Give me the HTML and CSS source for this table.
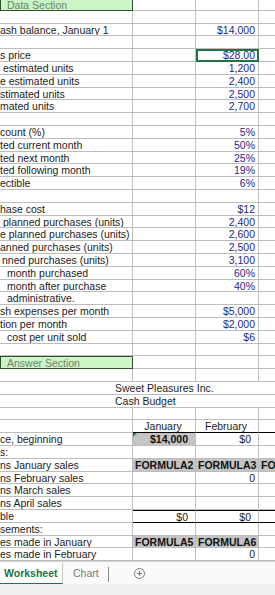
FILE: index.html
```html
<!DOCTYPE html>
<html>
<head>
<meta charset="utf-8">
<link rel="stylesheet" href="styles.css">
</head>
<body>
<div class="app">
  <div class="sheet">
    <div class="c sec">Data Section</div><div class="c"></div><div class="c"></div><div class="c"></div>
    <div class="c"></div><div class="c"></div><div class="c"></div><div class="c"></div>
    <div class="c">ash balance, January 1</div><div class="c"></div><div class="c v">$14,000</div><div class="c"></div>
    <div class="c"></div><div class="c"></div><div class="c"></div><div class="c"></div>
    <div class="c">s price</div><div class="c"></div><div class="c v sel">$28.00</div><div class="c"></div>
    <div class="c i3">estimated units</div><div class="c"></div><div class="c v">1,200</div><div class="c"></div>
    <div class="c">e estimated units</div><div class="c"></div><div class="c v">2,400</div><div class="c"></div>
    <div class="c">stimated units</div><div class="c"></div><div class="c v">2,500</div><div class="c"></div>
    <div class="c">mated units</div><div class="c"></div><div class="c v">2,700</div><div class="c"></div>
    <div class="c"></div><div class="c"></div><div class="c"></div><div class="c"></div>
    <div class="c">count (%)</div><div class="c"></div><div class="c v">5%</div><div class="c"></div>
    <div class="c">ted current month</div><div class="c"></div><div class="c v">50%</div><div class="c"></div>
    <div class="c">ted next month</div><div class="c"></div><div class="c v">25%</div><div class="c"></div>
    <div class="c">ted following month</div><div class="c"></div><div class="c v">19%</div><div class="c"></div>
    <div class="c">ectible</div><div class="c"></div><div class="c v">6%</div><div class="c"></div>
    <div class="c"></div><div class="c"></div><div class="c"></div><div class="c"></div>
    <div class="c">hase cost</div><div class="c"></div><div class="c v">$12</div><div class="c"></div>
    <div class="c i3">planned purchases (units)</div><div class="c"></div><div class="c v">2,400</div><div class="c"></div>
    <div class="c">e planned purchases (units)</div><div class="c"></div><div class="c v">2,600</div><div class="c"></div>
    <div class="c">anned purchases (units)</div><div class="c"></div><div class="c v">2,500</div><div class="c"></div>
    <div class="c i2">nned purchases (units)</div><div class="c"></div><div class="c v">3,100</div><div class="c"></div>
    <div class="c i7">month purchased</div><div class="c"></div><div class="c v">60%</div><div class="c"></div>
    <div class="c i7">month after purchase</div><div class="c"></div><div class="c v">40%</div><div class="c"></div>
    <div class="c i7">administrative.</div><div class="c"></div><div class="c"></div><div class="c"></div>
    <div class="c">sh expenses per month</div><div class="c"></div><div class="c v">$5,000</div><div class="c"></div>
    <div class="c">tion per month</div><div class="c"></div><div class="c v">$2,000</div><div class="c"></div>
    <div class="c i7">cost per unit sold</div><div class="c"></div><div class="c v">$6</div><div class="c"></div>
    <div class="c"></div><div class="c"></div><div class="c"></div><div class="c"></div>
    <div class="c sec">Answer Section</div><div class="c"></div><div class="c"></div><div class="c"></div>
    <div class="c"></div><div class="c"></div><div class="c"></div><div class="c"></div>
    <div class="c m">Sweet Pleasures Inc.</div>
    <div class="c m">Cash Budget</div>
    <div class="c"></div><div class="c"></div><div class="c"></div><div class="c"></div>
    <div class="c"></div><div class="c h">January</div><div class="c h">February</div><div class="c h"></div>
    <div class="c">ce, beginning</div><div class="c v b g acc tri">$14,000</div><div class="c v k acc">$0</div><div class="c"></div>
    <div class="c">s:</div><div class="c"></div><div class="c"></div><div class="c"></div>
    <div class="c">ns January sales</div><div class="c b g">FORMULA2</div><div class="c b g">FORMULA3</div><div class="c b g">FO</div>
    <div class="c">ns February sales</div><div class="c"></div><div class="c v k">0</div><div class="c"></div>
    <div class="c">ns March sales</div><div class="c"></div><div class="c"></div><div class="c"></div>
    <div class="c">ns April sales</div><div class="c"></div><div class="c"></div><div class="c"></div>
    <div class="c">ble</div><div class="c v k acc tot">$0</div><div class="c v k acc tot">$0</div><div class="c tot"></div>
    <div class="c">sements:</div><div class="c"></div><div class="c"></div><div class="c"></div>
    <div class="c">es made in January</div><div class="c b g">FORMULA5</div><div class="c b g">FORMULA6</div><div class="c"></div>
    <div class="c">es made in February</div><div class="c"></div><div class="c v k">0</div><div class="c"></div>
  </div>
  <div class="tabs">
    <div class="tab active">Worksheet</div>
    <div class="tab">Chart</div>
    <div class="sep"></div>
    <div class="add">
      <svg width="11" height="11" viewBox="0 0 11 11"><circle cx="5.5" cy="5.5" r="5" fill="none" stroke="#7a7a7a" stroke-width="1"/><path d="M5.5 2.8v5.4M2.8 5.5h5.4" stroke="#7a7a7a" stroke-width="1"/></svg>
    </div>
  </div>
  <div class="status"></div>
</div>
</body>
</html>
```

FILE: styles.css
```css
html, body {
  margin: 0;
  padding: 0;
  background: #ffffff;
}
body {
  width: 275px;
  height: 595px;
  overflow: hidden;
  font-family: "Liberation Sans", Arial, sans-serif;
}
.app {
  width: 275px;
  height: 595px;
  display: flex;
  flex-direction: column;
  overflow: hidden;
}
.sheet {
  margin-top: -2px;
  display: grid;
  grid-template-columns: 133px 63px 63px 63px;
  grid-auto-rows: 13px 13px 12px 13px 13px;
  font-size: 10.5px;
  color: #1c1c1c;
  flex: none;
}
.c {
  box-sizing: border-box;
  border-right: 1px solid #bdbdbd;
  border-bottom: 1px solid #bdbdbd;
  white-space: nowrap;
  overflow: hidden;
  line-height: 12px;
  padding: 0 2px 0 0;
  position: relative;
}
.i2 { padding-left: 2px; }
.i3 { padding-left: 3px; }
.i7 { padding-left: 7px; }
.v {
  text-align: right;
  color: #26268a;
  padding-right: 3px;
}
.k { color: #1c1c1c; }
.acc { padding-right: 7px; }
.b { font-weight: bold; color: #111; padding-left: 2px; }
.g { background: #c4c4c4; }
.sec {
  background: #ccf5c6;
  border: 1px solid #2f4f2f;
  color: #6f7f6f;
  padding-left: 6px;
}
.sel {
  outline: 2px solid #217346;
  outline-offset: -2px;
}
.m {
  grid-column: 1 / -1;
  text-align: left;
  padding-left: 115px;
  border-right: none;
}
.h {
  text-align: center;
  border-bottom: 1px solid #000;
  line-height: 13px;
}
.tot {
  border-top: 1px solid #000;
  border-bottom: 1px solid #000;
}
.tri::before {
  content: "";
  position: absolute;
  left: 0;
  top: 0;
  border-top: 4px solid #2a8a3a;
  border-right: 4px solid transparent;
}
.tabs {
  flex: none;
  margin-top: auto;
  height: 22px;
  display: flex;
  align-items: stretch;
  background: #fafafa;
  border-top: 1px solid #d0d0d0;
  font-size: 10.5px;
}
.tab {
  display: flex;
  align-items: center;
  padding: 0 9px 0 4px;
  color: #777;
}
.tab.active {
  background: #fff;
  color: #217346;
  font-weight: bold;
  border-right: 1px solid #c8c8c8;
  border-bottom: 1px solid #217346;
  width: 54px;
  padding-left: 4px;
  padding-right: 4px;
}
.tab + .tab {
  padding-left: 10px;
}
.sep {
  width: 1px;
  background: #8a8a8a;
  margin: 5px 0 2px;
}
.add {
  display: flex;
  align-items: center;
  margin-left: 25px;
}
.status {
  flex: none;
  height: 12px;
  background: #efefef;
}
```
